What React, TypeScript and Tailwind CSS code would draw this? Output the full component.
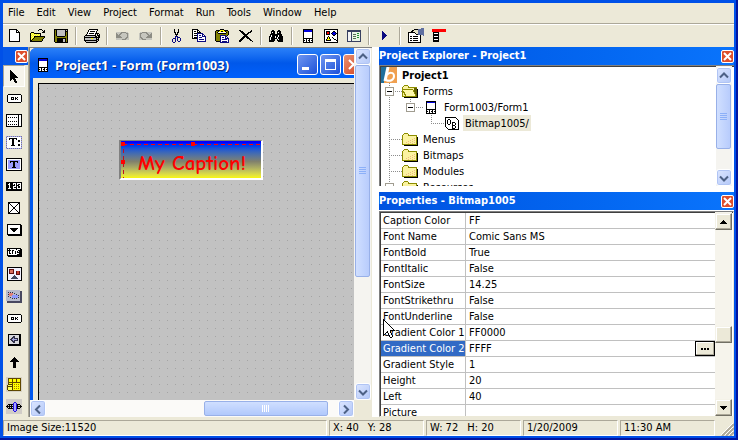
import React from "react";

type Icon = React.ReactNode;

function Svg({ w = 16, h = 16, children }: { w?: number; h?: number; children: React.ReactNode }) {
  return (
    <svg width={w} height={h} viewBox={`0 0 ${w} ${h}`} shapeRendering="crispEdges" className="block shrink-0" aria-hidden="true">
      {children}
    </svg>
  );
}

/* Draws a small bitmap from rows of characters, one colour for each character. */
const PALETTE: Record<string, string> = {
  k: "#000000",
  w: "#ffffff",
  b: "#0a0a80",
  B: "#0000e0",
  g: "#808080",
  l: "#c0c0c0",
  y: "#ffff00",
  o: "#808000",
  c: "#f5f08c",
  r: "#ff0000",
  p: "#9c9cff",
  u: "#8c8c84",
  v: "#c6c6be",
};

function Pixels({ rows }: { rows: string[] }) {
  const w = Math.max(...rows.map((r) => r.length));
  return (
    <Svg w={w} h={rows.length}>
      {rows.flatMap((row, y) =>
        [...row].map((ch, x) => (PALETTE[ch] ? <rect key={`${x}-${y}`} x={x} y={y} width={1} height={1} fill={PALETTE[ch]} /> : null)),
      )}
    </Svg>
  );
}

const newIcon = (
  <Pixels rows={["kkkkkkkk   ", "kwwwwwwkk  ", "kwwwwwwkwk ", "kwwwwwwkkkk", "kwwwwwwwwwk", "kwwwwwwwwwk", "kwwwwwwwwwk", "kwwwwwwwwwk", "kwwwwwwwwwk", "kwwwwwwwwwk", "kwwwwwwwwwk", "kwwwwwwwwwk", "kkkkkkkkkkk"]} />
);
const openIcon = (
  <Pixels rows={["         kkk    ", "        k   k k ", "             kk ", " kkk        kkk ", "kycykkkkkkk     ", "kcycycycyck     ", "kycycycycyk     ", "kcyckkkkkkkkkkk ", "kycykoooooooook ", "kcykoooooooook  ", "kykoooooooook   ", "kkooooooooook   ", "kkkkkkkkkkkk    "]} />
);
const saveIcon = (
  <Pixels rows={["kkkkkkkkkkkkkk", "kokllllllllklk", "kokllllllllkkk", "kokllllllllkok", "kokllllllllkok", "kokllllllllkok", "kokllllllllkok", "kookkkkkkkkook", "kooooooooooook", "kookkkkkkkkkok", "kookkkkkkllkok", "kookkkkkkllkok", "kookkkkkkllkok", " kkkkkkkkkkkkk"]} />
);
const printIcon = (
  <Pixels rows={["     kkkkkkkkk  ", "    kwwwwwwwwk  ", "    kwkkkkkwk   ", "   kwwwwwwwwk   ", "   kwkkkkkwkkkk ", "  kwwwwwwwwk k k", " kkkkkkkkkkk kkk", "kllllllllllkk kk", "kkkkkkkkkkkkkkkk", "kllllllyylllklk ", "klllllllllllkkk ", "kkkkkkkkkkkkklk ", " kllllllllllkk  ", "  kkkkkkkkkkk   "]} />
);
const undoIcon = (
  <Pixels rows={["vvvvvuuuuuvv ", "uvvvuuvvvvuuv", "uuvuuvvvvvvuv", "uuuuvvvvvvvuv", "uuuuuvvvvvvuv", "uuuuuuvvvvuuv", "vvvvvvvvvuuvv", "vvvvvvuuuuvvv"]} />
);
const redoIcon = (
  <Pixels rows={[" vvuuuuuvvvvv", "vuuvvvvuuvvvu", "vuvvvvvvuuvuu", "vuvvvvvvvuuuu", "vuvvvvvvuuuuu", "vuuvvvvuuuuuu", "vvuuvvvvvvvvv", "vvvuuuuvvvvvv"]} />
);
const cutIcon = (
  <Pixels rows={["  k   k  ", "  k   k  ", "  k   k  ", "  kk kk  ", "   k k   ", "   kkk   ", "    k    ", "   bbb   ", "   b bbb ", " bbb b  b", "b  b b  b", "b  b b  b", "b  b  bb ", " bb      "]} />
);
const copyIcon = (
  <Pixels rows={["kkkkkk         ", "kwwwwkk        ", "kwkkwkwk       ", "kwwwwkkkk      ", "kwkkkbbbbbb    ", "kwwwwbwwwwbb   ", "kwkkkbwbbwbwb  ", "kwwwwbwwwwbbbb ", "kwkkkbwbbbwwwb ", "kkkkkbwwwwwwwb ", "     bwbbbbbwb ", "     bwwwwwwwb ", "     bbbbbbbbb "]} />
);
const pasteIcon = (
  <Pixels rows={["     kkkk      ", " kkkkyyyykkkk  ", "kookyykkyykook ", "kokwwwwwwwwkok ", "kookkkkkkkkook ", "kooooooooooook ", "koooobbbbbbok  ", "koooobwwwwbb   ", "koooobwbbwbwb  ", "koooobwwwwbbbb ", "koooobwbbbbbwb ", "koooobwwwwwwwb ", " kkkkbwbbbbbwb ", "     bbbbbbbbb "]} />
);
const deleteIcon = (
  <Pixels rows={["kk          k ", " kkk       kk ", "  kkk    kkk  ", "   kkk  kk    ", "    kkkkk     ", "     kkk      ", "    kkkkk     ", "   kkk kkk    ", "  kkk   kkk   ", " kkk      kk  ", "kkk        kk ", "kk           k"]} />
);
const findIcon = (
  <Pixels rows={["   kk    kk    ", "  kkkk  kkkk   ", "  kwkk  kwkk   ", "  kkkk  kkkk   ", " kkkkkkkkkkkk  ", " kwkkkkkkwkkk  ", "kkwkkkwkkwkkkk ", "kwkkkkwkwkkkkk ", "kwkkkkkkwkkkkk ", "kwkkkk  kwkkkk ", "kkkkkk  kkkkkk ", "kkkkk    kkkkk "]} />
);
const formIcon = (
  <Pixels rows={["kkkkkkkkkk", "kBBBBBBBBk", "kBBBBBBBBk", "kwwwwwwwwk", "kwwwwwwwwk", "kwwwwwwwwk", "kwwwwwwwwk", "kwwwwwwwwk", "kwwwwwwwwk", "kkkkkkkkkk", "kwwkwwkwwk", "kkwkwkkwkk", "kwwkwwkwwk", "kkkkkkkkkk"]} />
);
const treeFormIcon = (
  <Pixels rows={["kkkkkkkkkk", "kBBBBBBBBk", "kwwwwwwwwk", "kwwwwwwwwk", "kwwwwwwwwk", "kwwwwwwwwk", "kwwwwwwwwk", "kwwwwwwwwk", "kkkkkkkkkk", "kwwkwwkwwk", "kkwkwkkwkk", "kwwkwwkwwk", "kkkkkkkkkk"]} />
);
const shapesIcon = (
  <Pixels rows={["kkkkkkkkkkkkkk", "kwwwwwwwwwwwwk", "kwkkkkwwwkkwwk", "kwkrrkwwkBBkwk", "kwkrrkwkBBBBkk", "kwkkkkwwkBBkwk", "kwwwwwwwwkkwwk", "kwwwkwwwwwwwwk", "kwwkykwwkwwwwk", "kwwkykwwwkwwwk", "kwkyyykwwwkkwk", "kwkkkkkwwwwwkk", "kwwwwwwwwwwwwk", "kkkkkkkkkkkkkk"]} />
);
const listIcon = (
  <Svg w={14} h={12}>
    <path d="M0 0h14v12H0z" fill="#384060" />
    <path d="M1 2h3v9H1z" fill="#f4f4f4" />
    <path d="M5 2h8v9H5z" fill="#e9f3e4" />
    <path d="M6 4h3v1H6zM6 6h3v1H6zM6 8h3v1H6z" fill="#507050" />
    <path d="M10 3h2v1h-2zM10 5h2v1h-2zM10 7h2v1h-2z" fill="#209030" />
  </Svg>
);
const playIcon = <Pixels rows={["b    ", "bb   ", "bbb  ", "bbbb ", "bbbbb", "bbbb ", "bbb  ", "bb   ", "b    "]} />;
const propsIcon = (
  <Svg w={17} h={15}>
    <path d="M1 4h13v11H1z" fill="#000" />
    <path d="M2 5h11v9H2z" fill="#fff" />
    <path d="M3 8h2v1H3zM3 10h2v1H3zM3 12h2v1H3zM6 8h5v1H6zM6 10h5v1H6zM6 12h5v1H6z" fill="#000" />
    <path d="M4 3l4-2h4v6H9L7 5H4z" fill="#000" />
    <path d="M5 3l3-1h3v4H9L7 4z" fill="#e8e4c8" />
    <path d="M11 1h3v6h-3zM14 0h3v8l-3-1z" fill="#6070a0" />
  </Svg>
);
const menuEditIcon = (
  <Pixels rows={["rrrrrrrrrrrrrr", "rrrrrrrrrrrrrr", "rrrrrrrrrrrrrr", " kkkkkk       ", " kwwwwk       ", " kkkkkk       ", " kkkkkk       ", " kwwwwk       ", " kkkkkk       ", " kkkkkk       ", " kwwwwk       ", " kkkkkk       ", " kkkkkk       "]} />
);

const toolbar: (["|"] | [string, Icon])[] = [
  ["New", newIcon],
  ["Open", openIcon],
  ["Save", saveIcon],
  ["|"],
  ["Print", printIcon],
  ["|"],
  ["Undo", undoIcon],
  ["Redo", redoIcon],
  ["|"],
  ["Cut", cutIcon],
  ["Copy", copyIcon],
  ["Paste", pasteIcon],
  ["Delete", deleteIcon],
  ["|"],
  ["Find", findIcon],
  ["|"],
  ["Form", formIcon],
  ["Bitmap", shapesIcon],
  ["Menu", listIcon],
  ["|"],
  ["Run", playIcon],
  ["|"],
  ["Properties", propsIcon],
  ["Menu editor", menuEditIcon],
];

/* Toolbox pictures */
const arrowTool = (
  <Pixels rows={["k       ", "kk      ", "kkk     ", "kkkk    ", "kkkkk   ", "kkkkkk  ", "kkkkkkk ", "kkkkkkkk", "kkkkk   ", "kk kkk  ", "k   kk  ", "    kkk ", "     kk "]} />
);
const okTool = (
  <Pixels rows={[" kkkkkkkkkkkkk ", "kwwwwwwwwwwwwwk", "kwwwwwwwwwwwwwk", "kwwwkkkwkwkwwwk", "kwwwkwkwkkwwwwk", "kwwwkkkwkwkwwwk", "kwwwwwwwwwwwwwk", "kwwwwwwwwwwwwwk", " kkkkkkkkkkkkk "]} />
);
const listTool = (
  <Pixels rows={["kkkkkkkkkkkkkkkk", "kwwwwwwwwwwwkwwk", "kwwwwwwwwwwwkwwk", "kwkwkwkwkwkwkwwk", "kwwwwwwwwwwwkwwk", "kwwwwwwwwwwwkwwk", "kwwwwwwwwwwwkwwk", "kwkwkwkwkwkwkwwk", "kwwwwwwwwwwwkwwk", "kwwwwwwwwwwwkwwk", "kwkwkwkwkwkwkwwk", "kwwwwwwwwwwwkwwk", "kkkkkkkkkkkkkkkk"]} />
);
const labelTool = (
  <Pixels rows={["pgpgpgpgpgpgpgpg", "gwwwwwwwwwwwwwwp", "pwwkkkkkkkkwwwwg", "gwwkwwkkwwkwwwwp", "pwwwwwkkwwwwkkwg", "gwwwwwkkwwwwkkwp", "pwwwwwkkwwwwwwwg", "gwwwwwkkwwwwwwwp", "pwwwwwkkwwwwkkwg", "gwwwwkkkkwwwkkwp", "pwwwwwwwwwwwwwwg", "gwwwwwwwwwwwwwwp", "pgpgpgpgpgpgpgpg"]} />
);
const fieldTool = (
  <Pixels rows={["kkkkkkkkkkkkkkkk", "kwwwwwwwwwwwwwwk", "kwppppppppppppwk", "kwppkkkkkkkkppwk", "kwppkppkkppkppwk", "kwpppppkkpppppwk", "kwpppppkkpppppwk", "kwpppppkkpppppwk", "kwpppppkkpppppwk", "kwppppkkkkppppwk", "kwppppppppppppwk", "kwwwwwwwwwwwwwwk", "kkkkkkkkkkkkkkkk"]} />
);
const countTool = (
  <Pixels rows={["kkkkkkkkkkkkkkkk", "kkkwkkkwwwkwwwwk", "kkwwkkkwkwkwkkwk", "kkkwkkkkkwkkkwwk", "kkkwkkkwwwkwkkwk", "kkkwkkkwkkkwkkwk", "kkwwwkkwwwkwwwwk", "kkkkkkkkkkkkkkkk", "kkkkkkkkkkkkkkkk"]} />
);
const checkTool = (
  <Pixels rows={["kkkkkkkkkkkk", "kkwwwwwwwwkk", "kwkwwwwwwkwk", "kwwkwwwwkwwk", "kwwwkwwkwwwk", "kwwwwkkwwwwk", "kwwwwkkwwwwk", "kwwwkwwkwwwk", "kwwkwwwwkwwk", "kwkwwwwwwkwk", "kkwwwwwwwwkk", "kkkkkkkkkkkk"]} />
);
const comboTool = (
  <Pixels rows={["kkkkkkkkkkkkkk ", "kwwwwwwwwwwwwkk", "kwwwwwwwwwwwwkk", "kwwwwwwwwwwwwkk", "kwwkkkkkkkkwwkk", "kwwwkkkkkkwwwkk", "kwwwwkkkkwwwwkk", "kwwwwwkkwwwwwkk", "kwwwwwwwwwwwwkk", "kwwwwwwwwwwwwkk", "kkkkkkkkkkkkkkk", " kkkkkkkkkkkkkk"]} />
);
const triggerTool = (
  <Pixels rows={["kkkkkkkkkkkkkk ", "kwkwwwwwwkwwwkk", "kkkkwkkwwwwkkkk", "kwkwwkwwkwkwkkk", "kwkwwkwwkwkkkkk", "kwkkwkwwkwwwkkk", "kwwwwwwwwwkkkkk", "kkkkkkkkkkkkkkk", " kkkkkkkkkkkkkk"]} />
);
const bitmapTool = (
  <Svg w={15} h={14}>
    <path d="M0 0h15v14H0z" fill="#000" />
    <path d="M1 1h13v12H1z" fill="#f2f2ff" />
    <path d="M2 2h5v5H2z" fill="#601010" />
    <path d="M3 3h3v3H3z" fill="#d87060" />
    <path d="M9 4h4v4H9z" fill="#601010" />
    <path d="M10 4h2v3h-2z" fill="#c84030" />
    <path d="M7 8h1v1h1v1h1v1h1v1H4v-1h1v-1h1V9h1z" fill="#404860" />
  </Svg>
);
const gadgetTool = (
  <Svg w={16} h={13}>
    <path d="M1 1h15v12H1z" fill="#484860" />
    <path d="M0 0h14v11H0z" fill="#b8bccc" />
    <path d="M3 3h4v3H3z" fill="#e08078" />
    <path d="M6 5h6v3H6z" fill="#8c98ff" />
    <path d="M2 2h1v1H2zM4 2h1v1H4zM6 2h1v1H6zM8 3h1v1H8zM10 4h1v1h-1zM12 5h1v1h-1zM12 7h1v1h-1zM10 8h1v1h-1zM8 8h1v1H8zM6 8h1v1H6zM4 7h1v1H4zM2 6h1v1H2zM2 4h1v1H2z" fill="#303048" />
  </Svg>
);
const shiftTool = (
  <Svg w={13} h={12}>
    <path d="M0 0h13v12H0z" fill="#000" />
    <path d="M1 1h10v9H1z" fill="#d8d8dc" />
    <path d="M2 5h1V4h1V3h1V2h2v2h3v3H7v2H5V8H4V7H3V6H2z" fill="#303048" />
    <path d="M4 5h1V4h1v1h3v1H6v1H5V6H4z" fill="#a8a8e0" />
  </Svg>
);
const upTool = (
  <Pixels rows={["    k    ", "   kkk   ", "  kkkkk  ", " kkkkkkk ", "kkkkkkkkk", "   kkk   ", "   kkk   ", "   kkk   ", "   kkk   ", "   kkk   ", "   kkk   "]} />
);
const gridTool = (
  <Svg w={16} h={15}>
    <path d="M0 0h16v15H0z" fill="#d6d2c6" />
    <path d="M2 1h13v13H2z" fill="#604800" />
    <path d="M3 2h3v3H3zM7 2h3v3H7zM11 2h3v3h-3zM3 6h3v2H3zM7 6h7v7H7z" fill="#ffff00" />
    <path d="M8 7h1v1H8zM10 7h1v1h-1zM12 7h1v1h-1zM8 9h1v1H8zM10 9h1v1h-1zM12 9h1v1h-1zM8 11h1v1H8zM10 11h1v1h-1zM12 11h1v1h-1z" fill="#a08000" />
    <path d="M2 7h4v1h1v5H6v1H2v-1H1V8h1z" fill="#504000" />
    <path d="M2 8h4v1H2zM2 10h4v3H2z" fill="#ffff50" />
  </Svg>
);
const sliderTool = (
  <Svg w={16} h={15}>
    <path d="M0 0h16v15H0z" fill="#d0ccc8" />
    <path d="M2 5h12v1H2zM0 7h16v1H0zM2 9h12v1H2zM1 6h1v3H1zM14 6h1v3h-1z" fill="#000" />
    <path d="M3 6h1v1H3zM5 6h1v1H5zM11 6h1v1h-1zM3 8h1v1H3zM5 8h1v1H5zM11 8h1v1h-1z" fill="#000" />
    <path d="M8 3h2v1h1v8h-1v1H8v-1H7V4h1z" fill="#2010e0" />
    <path d="M8 4h2v8H8z" fill="#a8a0ff" />
  </Svg>
);

const tools: [string, Icon][] = [
  ["Pointer", arrowTool],
  ["Button", okTool],
  ["List", listTool],
  ["Label", labelTool],
  ["Field", fieldTool],
  ["Counter", countTool],
  ["Checkbox", checkTool],
  ["Popup trigger", comboTool],
  ["Selector trigger", triggerTool],
  ["Bitmap", bitmapTool],
  ["Gadget", gadgetTool],
  ["Graphic button", okTool],
  ["Shift indicator", shiftTool],
  ["Scroll", upTool],
  ["Table", gridTool],
  ["Slider", sliderTool],
];

function PanelClose({ label }: { label: string }) {
  return (
    <button
      type="button"
      aria-label={label}
      className="flex h-[13px] w-[13px] shrink-0 items-center justify-center rounded-[2px] border border-white bg-[#dd4f2c]"
    >
      <svg width="9" height="9" viewBox="0 0 9 9" aria-hidden="true">
        <path d="M1 1l7 7M8 1L1 8" stroke="#fff" strokeWidth="2" />
      </svg>
    </button>
  );
}

function PanelTitle({ children }: { children: string }) {
  return (
    <div className="flex h-[18px] shrink-0 items-center justify-between bg-linear-to-r from-[#0052e0] to-[#0a74fc]">
      <h2 className="text-[11px] leading-[16px] font-bold text-white">{children}</h2>
      <PanelClose label={`Close ${children}`} />
    </div>
  );
}

type Dir = "up" | "down" | "left" | "right";
const CHEVRON: Record<Dir, string> = {
  up: "M1 6l4-4 4 4",
  down: "M1 3l4 4 4-4",
  left: "M7 1L3 5l4 4",
  right: "M3 1l4 4-4 4",
};

function ScrollButton({ dir }: { dir: Dir }) {
  return (
    <button
      type="button"
      aria-label={`Scroll ${dir}`}
      className="flex h-[17px] w-[16px] shrink-0 items-center justify-center rounded-[3px] border border-white bg-linear-to-br from-[#dce6ff] to-[#b4c8f8] shadow-[inset_0_0_0_1px_#b0c4f4]"
    >
      <svg width="10" height="10" viewBox="0 0 10 9" aria-hidden="true">
        <path d={CHEVRON[dir]} fill="none" stroke="#4d6185" strokeWidth="2" />
      </svg>
    </button>
  );
}

function Logo() {
  return (
    <Svg w={16} h={16}>
      <path d="M0 0h16v16H0z" fill="#f0a050" />
      <path d="M0 0h7L3 16H0z" fill="#1f6f9c" />
      <g shapeRendering="auto">
        <path d="M7 0L4 14" stroke="#fff" strokeWidth="3" fill="none" />
        <path d="M6 8c2-3 7-3 7 1s-4 6-8 4" stroke="#fff" strokeWidth="2" fill="none" />
      </g>
    </Svg>
  );
}

function Folder({ open = false }: { open?: boolean }) {
  return (
    <Svg w={16} h={13}>
      <path d="M2 3h13v1h1v9H2z" fill="#000" />
      <path d="M0 2h1V1h1V0h4v1h1v1h8v10H0z" fill="#8c8c00" />
      <path d="M1 2h1V1h4v2h8v8H1z" fill="#fbf3a0" />
      <path d="M12 5h1v1h-1zM10 6h1v1h-1zM8 7h1v1H8zM12 7h1v1h-1zM6 8h1v1H6zM10 8h1v1h-1zM4 9h1v1H4zM8 9h1v1H8zM12 9h1v1h-1zM6 10h1v1H6zM10 10h1v1h-1z" fill="#f0b880" />
      {open && (
        <>
          <path d="M12 3h3v9h-3z" fill="#606000" />
          <path d="M0 4h11v1h1v2h1v2h1v3H3v-2H2V8H1V6H0z" fill="#8c8c00" />
          <path d="M1 5h10v2h1v2h1v2H4V9H3V7H2V6H1z" fill="#fdf7a8" />
        </>
      )}
    </Svg>
  );
}

const objectIcon = (
  <Pixels rows={["kkkkkkkkkkk   ", "kwwwwwwwwwwk  ", "kwwkkwwwwwwwk ", "kwkwwkwwwwwwwk", "kwkwwkwwwwwwwk", "kwkwwkwkkkwwwk", "kwkwwkwkwwkwwk", "kwwkkwwkwwkwwk", "kwwwwwwkkkwwwk", "kwwwwwwkwwkwwk", " kwwwwwkwwkwwk", "  kwwwwkkkwwwk", "   kkkkkkkkkkk"]} />
);

/* One 21 pixel column of the tree, with its dotted guide lines and tick box. */
function Guide({ kind }: { kind: "blank" | "line" | "tee" | "elbow" | "open" | "openLast" }) {
  const box = kind === "open" || kind === "openLast";
  const down = kind === "elbow" || kind === "openLast" ? [0, 2, 4, 6, 8] : [0, 2, 4, 6, 8, 10, 12, 14];
  return (
    <Svg w={21} h={16}>
      {kind !== "blank" && down.map((y) => <rect key={y} x={8} y={y} width={1} height={1} fill="#8c8c8c" />)}
      {kind !== "blank" && kind !== "line" && [10, 12, 14, 16, 18, 20].map((x) => <rect key={x} x={x} y={8} width={1} height={1} fill="#8c8c8c" />)}
      {box && (
        <>
          <rect x="4" y="4" width="9" height="9" fill="#a09c90" />
          <rect x="5" y="5" width="7" height="7" fill="#fff" />
          <rect x="6" y="8" width="5" height="1" fill="#000" />
        </>
      )}
    </Svg>
  );
}

type TreeNode = { guides: React.ComponentProps<typeof Guide>["kind"][]; icon: Icon; text: string; bold?: boolean; selected?: boolean };

const nodes: TreeNode[] = [
  { guides: [], icon: <Logo />, text: "Project1", bold: true },
  { guides: ["open"], icon: <Folder open />, text: "Forms" },
  { guides: ["blank", "openLast"], icon: <span className="pl-[3px]">{treeFormIcon}</span>, text: "Form1003/Form1" },
  { guides: ["blank", "blank", "elbow"], icon: <span className="pl-px">{objectIcon}</span>, text: "Bitmap1005/", selected: true },
  { guides: ["tee"], icon: <Folder />, text: "Menus" },
  { guides: ["tee"], icon: <Folder />, text: "Bitmaps" },
  { guides: ["tee"], icon: <Folder />, text: "Modules" },
  { guides: ["open"], icon: <Folder />, text: "Resources" },
].map((n) => ({ ...n, guides: n.guides.map((g, i) => (i === 0 && g === "blank" ? "line" : g)) })) as TreeNode[];

function Explorer() {
  return (
    <section className="flex h-[139px] shrink-0 flex-col">
      <PanelTitle>Project Explorer - Project1</PanelTitle>
      <div className="flex min-h-0 flex-1 border-t border-l border-[#808080] bg-white shadow-[inset_1px_1px_0_#404040]">
        <ul className="min-w-0 flex-1 overflow-hidden pt-px pl-px">
          {nodes.map((n) => (
            <li key={n.text} className="flex h-[16px] items-center">
              {n.guides.map((g, i) => (
                <Guide key={i} kind={g} />
              ))}
              <span className="flex w-[19px] shrink-0 items-center">{n.icon}</span>
              <span
                className={`h-[16px] px-[2px] pt-px text-[11px] leading-[15px] whitespace-nowrap ${n.bold ? "font-bold" : ""} ${n.selected ? "bg-[#ece9d8]" : ""}`}
              >
                {n.text}
              </span>
            </li>
          ))}
        </ul>
        <div className="mr-[2px] flex w-[16px] shrink-0 flex-col bg-[#f5f4f0] pt-px">
          <ScrollButton dir="up" />
          <div className="flex h-[65px] w-[15px] shrink-0 flex-col items-center justify-center gap-px rounded-[2px] border border-[#98b0e8] bg-linear-to-r from-[#d0dfff] to-[#b8ccfc]">
            {[0, 1, 2, 3].map((i) => (
              <span key={i} className="h-px w-[7px] bg-[#8cb0f8]" />
            ))}
          </div>
          <div className="flex-1" />
          <ScrollButton dir="down" />
        </div>
      </div>
    </section>
  );
}

const properties: [string, string][] = [
  ["Caption Color", "FF"],
  ["Font Name", "Comic Sans MS"],
  ["FontBold", "True"],
  ["FontItalic", "False"],
  ["FontSize", "14.25"],
  ["FontStrikethru", "False"],
  ["FontUnderline", "False"],
  ["Gradient Color 1", "FF0000"],
  ["Gradient Color 2", "FFFF"],
  ["Gradient Style", "1"],
  ["Height", "20"],
  ["Left", "40"],
  ["Picture", ""],
];

const CLASSIC = "border border-t-[#f4f2e8] border-r-[#716f64] border-b-[#716f64] border-l-[#f4f2e8] bg-[#ece9d8] shadow-[inset_-1px_-1px_0_#aca899,inset_1px_1px_0_#ffffff]";

function ClassicScrollButton({ dir }: { dir: "up" | "down" }) {
  return (
    <button type="button" aria-label={`Scroll properties ${dir}`} className={`flex h-[17px] w-[17px] shrink-0 items-center justify-center ${CLASSIC}`}>
      <Svg w={7} h={4}>
        <path d={dir === "up" ? "M3 0h1v1h1v1h1v1h1v1H0V3h1V2h1V1h1z" : "M0 0h7v1H6v1H5v1H4v1H3V3H2V2H1V1H0z"} fill="#000" />
      </Svg>
    </button>
  );
}

function Properties() {
  return (
    <section className="relative flex min-h-0 flex-1 flex-col">
      <PanelTitle>Properties - Bitmap1005</PanelTitle>
      <div className="mt-px flex min-h-0 flex-1 border border-t-[#808080] border-r-[#ece9d8] border-b-[#ece9d8] border-l-[#808080] bg-white shadow-[inset_1px_1px_0_#404040]">
        <div className="min-w-0 flex-1 overflow-hidden pt-px pl-px">
          <table className="w-full table-fixed border-separate border-spacing-0 text-[11px] leading-[14px]">
            <colgroup>
              <col className="w-[85px]" />
              <col />
            </colgroup>
            <tbody>
              {properties.map(([name, value]) => {
                const on = name === "Gradient Color 2";
                return (
                  <tr key={name}>
                    <th
                      scope="row"
                      className={`h-[16px] border-r border-b border-[#c0c0c0] pt-px pl-[2px] text-left font-normal whitespace-nowrap ${on ? "bg-[#316ac5] text-white" : ""}`}
                    >
                      {name}
                    </th>
                    <td className="h-[16px] border-b border-[#c0c0c0] pl-[3px]">
                      <div className="flex h-[15px] items-center justify-between">
                        <span className="pt-px">{value}</span>
                        {on && (
                          <button
                            type="button"
                            aria-label="Choose colour"
                            className="flex h-[15px] w-[20px] items-center justify-center border border-black bg-[#ece9d8] shadow-[inset_-1px_-1px_0_#aca899,inset_1px_1px_0_#ffffff]"
                          >
                            <Svg w={8} h={2}>
                              <path d="M0 0h2v2H0zM3 0h2v2H3zM6 0h2v2H6z" fill="#000" />
                            </Svg>
                          </button>
                        )}
                      </div>
                    </td>
                  </tr>
                );
              })}
            </tbody>
          </table>
        </div>
        <div className="mr-px flex w-[17px] shrink-0 flex-col bg-[#f6f4ec] pt-px">
          <ClassicScrollButton dir="up" />
          <div className="grow-[96]" />
          <div className={`h-[17px] ${CLASSIC}`} />
          <div className="grow-[56]" />
          <ClassicScrollButton dir="down" />
        </div>
      </div>
      <div className="pointer-events-none absolute top-[127px] left-[4px]">
        <Pixels
          rows={["k           ", "kk          ", "kwk         ", "kwwk        ", "kwwwk       ", "kwwwwk      ", "kwwwwwk     ", "kwwwwwwk    ", "kwwwwwwwk   ", "kwwwwwwwwk  ", "kwwwwwwwwwk ", "kwwwwwwkkkkk", "kwwwkwwk    ", "kwwkkwwk    ", "kwk  kwwk   ", "kk   kwwk   ", "k     kwwk  ", "      kwwk  ", "       kk   "]}
        />
      </div>
    </section>
  );
}

function Toolbox() {
  return (
    <aside className="flex w-[26px] shrink-0 flex-col border-r border-[#aca899]">
      <div className="flex h-[18px] shrink-0 items-center justify-end bg-[#0558e8]">
        <PanelClose label="Close toolbox" />
      </div>
      <div className="flex flex-col">
        {tools.map(([name, icon], i) => (
          <button
            key={name}
            type="button"
            aria-label={name}
            className={`flex h-[22px] w-[22px] shrink-0 items-center justify-center ${i === 0 ? "border border-t-[#aca899] border-r-white border-b-white border-l-[#aca899] bg-[#f6f4ec]" : ""}`}
          >
            {icon}
          </button>
        ))}
      </div>
    </aside>
  );
}

function Caption({ kind }: { kind: "min" | "max" }) {
  return (
    <button
      type="button"
      aria-label={kind === "min" ? "Minimize" : "Maximize"}
      className="flex h-[21px] w-[21px] items-center justify-center rounded-[3px] border border-white bg-linear-to-br from-[#6f95f0] to-[#1c4fd8]"
    >
      <Svg w={13} h={13}>
        {kind === "min" ? <path d="M1 9h7v3H1z" fill="#fff" /> : <path d="M1 1h11v11H1zM2 4v7h9V4z" fill="#fff" fillRule="evenodd" />}
      </Svg>
    </button>
  );
}

function Designer() {
  return (
    <main className="flex min-w-0 flex-1 flex-col border-t border-l border-[#808080] bg-[#ece9d8] pr-px">
      <div className="flex min-h-0 flex-1">
        <div className="flex min-w-0 flex-1 flex-col overflow-hidden rounded-tl-[6px] bg-[#0058ee] pl-[3px]">
          <div className="-ml-[3px] flex h-[30px] shrink-0 items-center overflow-hidden bg-linear-to-b from-[#2a80f8] via-[#0058ea] to-[#0060fc] pt-[3px] pl-[8px]">
            {formIcon}
            <h1 className="flex-1 pl-[7px] font-['Open_Sans',sans-serif] text-[13px] leading-[18px] font-bold whitespace-nowrap text-white [text-shadow:1px_1px_0_#0a2a80]">
              Project1 - Form (Form1003)
            </h1>
            <div className="-mr-[10px] flex gap-[2px]">
              <Caption kind="min" />
              <Caption kind="max" />
              <button
                type="button"
                aria-label="Close form"
                className="flex h-[21px] w-[21px] items-center justify-center rounded-[3px] border border-white bg-linear-to-br from-[#e89070] to-[#d03c14]"
              >
                <svg width="13" height="13" viewBox="0 0 13 13" aria-hidden="true">
                  <path d="M2 2l9 9M11 2l-9 9" stroke="#fff" strokeWidth="2" />
                </svg>
              </button>
            </div>
          </div>
          <div className="flex min-h-0 flex-1 bg-[#ece9d8] pt-[5px] pl-[5px]">
            <div className="relative flex-1 border-t border-l border-black bg-[conic-gradient(at_1px_1px,#c2c2c2_270deg,#a4a4a4_0)] bg-size-[8px_8px] bg-position-[0px_4px]">
              <div className="absolute top-[56px] left-[80px] h-[40px] w-[144px] border-t border-r-2 border-b-2 border-l-2 border-t-[#808080] border-r-white border-b-white border-l-[#808080] bg-linear-to-b from-[#0000ff] from-5% via-[#80806c] via-55% to-[#f8f800] to-100%">
                <p className="pt-[11px] pl-[17px] font-['Comic_Sans_MS','Comic_Neue',Lato,cursive] text-[21px] leading-[22px] font-black whitespace-nowrap text-[#ff0000]">
                  My Caption!
                </p>
                <div className="absolute inset-0">
                  <svg width="100%" height="100%" shapeRendering="crispEdges" aria-hidden="true">
                    <path d="M2 3.5h140" stroke="#f00" strokeDasharray="4 3" />
                    <path d="M2.500 8v34" stroke="#c01020" strokeDasharray="4 3" />
                    <path d="M0 1h4v4H0zM70 1h4v4h-4zM0 19h4v4H0z" fill="#f00" />
                  </svg>
                </div>
              </div>
            </div>
          </div>
        </div>
        <div className="flex w-[17px] shrink-0 flex-col items-center bg-[#f5f4f0]">
          <ScrollButton dir="up" />
          <div className="flex grow-[210] flex-col items-center justify-center gap-px rounded-[2px] border border-[#98b0e8] bg-linear-to-r from-[#d0dfff] to-[#b8ccfc] px-[3px]">
            {[0, 1, 2, 3].map((i) => (
              <span key={i} className="h-px w-[7px] bg-[#8cb0f8]" />
            ))}
          </div>
          <div className="grow-[110]" />
          <ScrollButton dir="down" />
        </div>
      </div>
      <div className="flex h-[17px] shrink-0 pr-[17px]">
        <div className="flex flex-1 items-center bg-[#fbfaf8]">
          <ScrollButton dir="left" />
          <div className="grow-[157]" />
          <div className="flex h-[15px] grow-[115] items-center justify-center gap-px rounded-[2px] border border-[#98b0e8] bg-linear-to-b from-[#d0dfff] to-[#b0c8fc]">
            {[0, 1, 2, 3].map((i) => (
              <span key={i} className="h-[7px] w-px bg-[#ffffff]" />
            ))}
          </div>
          <div className="grow-[10]" />
          <ScrollButton dir="right" />
        </div>
      </div>
    </main>
  );
}

const INSET = "border border-t-[#aca899] border-r-white border-b-white border-l-[#aca899]";

function StatusBar() {
  return (
    <footer className="flex h-[19px] shrink-0 gap-[2px] bg-[#ece9d8] pt-[3px] text-[11px] leading-[14px]">
      <div className={`flex-1 pl-[3px] ${INSET}`}>Image Size:11520</div>
      <div className={`flex w-[95px] gap-[9px] pl-[3px] whitespace-nowrap ${INSET}`}>
        <span>X: 40</span>
        <span>Y: 28</span>
      </div>
      <div className={`flex w-[95px] gap-[9px] pl-[3px] whitespace-nowrap ${INSET}`}>
        <span>W: 72</span>
        <span>H: 20</span>
      </div>
      <div className={`w-[95px] pl-[3px] ${INSET}`}>1/20/2009</div>
      <div className={`w-[95px] pl-[3px] ${INSET}`}>11:30 AM</div>
      <div className="flex w-[17px] items-end justify-end">
        <svg width="13" height="13" viewBox="0 0 13 13" aria-hidden="true">
          <path d="M1 13L13 1M5 13l8-8M9 13l4-4" stroke="#aca899" strokeWidth="2" />
          <path d="M0 12L12 0M4 12l8-8M8 12l4-4" stroke="#fff" strokeWidth="1" />
        </svg>
      </div>
    </footer>
  );
}

const menus = ["File", "Edit", "View", "Project", "Format", "Run", "Tools", "Window", "Help"];

export default function App() {
  return (
    <div className="flex h-screen flex-col overflow-hidden border-r-2 border-b-2 border-[#0014a0] font-['DejaVu_Sans_Condensed','Noto_Sans',sans-serif] text-black">
      <div className="flex min-h-0 flex-1 flex-col border-t-[3px] border-r-2 border-b-2 border-l-[3px] border-[#0050e8] bg-[#ece9d8]">
        <nav className="flex h-[20px] shrink-0 items-center gap-[12px] pl-[5px] text-[11px] leading-[16px]">
          {menus.map((m) => (
            <button key={m} type="button">
              {m}
            </button>
          ))}
        </nav>
        <div className="flex h-[24px] shrink-0 items-center border-t border-[#aca899] shadow-[inset_0_1px_0_#ffffff]">
          {toolbar.map(([name, icon], i) =>
            icon ? (
              <button key={i} type="button" aria-label={name} className="flex h-[22px] w-[23px] shrink-0 items-center justify-center">
                {icon}
              </button>
            ) : (
              <span key={i} className="mr-[3px] ml-[3px] h-[18px] w-[2px] shrink-0 border-r border-l border-l-[#aca899] border-r-white" />
            ),
          )}
        </div>
        <div className="flex min-h-0 flex-1">
          <Toolbox />
          <Designer />
          <div className="flex w-[362px] shrink-0 flex-col gap-[6px] bg-white pl-[7px]">
            <Explorer />
            <Properties />
          </div>
        </div>
        <StatusBar />
      </div>
    </div>
  );
}
